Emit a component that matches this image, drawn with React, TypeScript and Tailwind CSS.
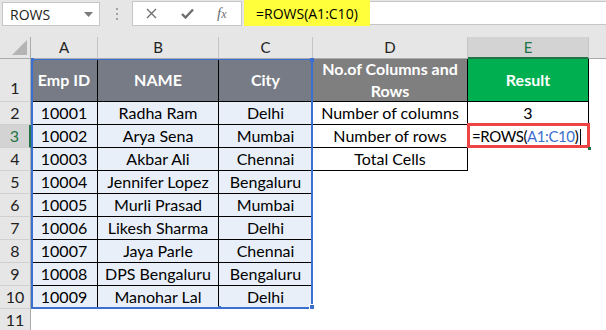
import React from 'react';

const cellFont = "font-['Lato',sans-serif]";

const rows = [
  ['10001', 'Radha Ram', 'Delhi'],
  ['10002', 'Arya Sena', 'Mumbai'],
  ['10003', 'Akbar Ali', 'Chennai'],
  ['10004', 'Jennifer Lopez', 'Bengaluru'],
  ['10005', 'Murli Prasad', 'Mumbai'],
  ['10006', 'Likesh Sharma', 'Delhi'],
  ['10007', 'Jaya Parle', 'Chennai'],
  ['10008', 'DPS Bengaluru', 'Bengaluru'],
  ['10009', 'Manohar Lal', 'Delhi'],
];

const FormulaBar = () => (
  <div className="flex h-[27px] items-start bg-[#e6e6e6] font-['Open_Sans',sans-serif]">
    <div className="ml-[2px] mt-[2px] flex h-[24px] w-[98px] items-center justify-between border border-[#c6c6c6] bg-white pl-[7px] pr-[6px] text-[14px] text-[#222]">
      <span>ROWS</span>
      <svg width="9" height="5" viewBox="0 0 9 5">
        <path d="M0 0h9L4.5 5z" fill="#7b7b7b" />
      </svg>
    </div>
    <div className="ml-[16px] mt-[8px] flex flex-col gap-[3px]">
      <span className="h-[2px] w-[2px] bg-[#a0a0a0]" />
      <span className="h-[2px] w-[2px] bg-[#a0a0a0]" />
      <span className="h-[2px] w-[2px] bg-[#a0a0a0]" />
    </div>
    <div className="ml-[14px] mt-[1px] flex h-[25px] w-[110px] items-center border border-[#c6c6c6] bg-white">
      <svg className="ml-[13px]" width="11" height="11" viewBox="0 0 11 11">
        <path d="M1 1l9 9M10 1l-9 9" stroke="#6e6e6e" strokeWidth="1.3" />
      </svg>
      <svg className="ml-[24px]" width="13" height="11" viewBox="0 0 13 11">
        <path d="M1 6l3.5 3.5L12 1.5" stroke="#6e6e6e" strokeWidth="2.4" fill="none" />
      </svg>
      <span className="ml-[23px] font-['Liberation_Serif',serif] text-[15px] italic leading-none text-[#6e6e6e]">
        f<span className="text-[12px]">x</span>
      </span>
    </div>
    <div className="ml-[2px] flex h-[26px] flex-1 items-stretch">
      <div className="flex w-[126px] items-center bg-[#ffff3c] pl-[12px] text-[14px] text-black">=ROWS(A1:C10)</div>
      <div className="mt-[1px] h-[24px] flex-1 border-y border-[#c6c6c6] bg-white" />
    </div>
  </div>
);

const ColHeader = ({ label, w, selected }: { label: string; w: string; selected?: boolean }) => (
  <div
    className={`${w} flex items-center justify-center border-r border-[#c4c4c4] ${
      selected ? 'border-b-2 border-b-[#217346] bg-[#d3d3d3] text-[#217346]' : 'border-b border-b-[#ababab]'
    }`}
  >
    {label}
  </div>
);

const RowNum = ({ n, h, selected, bottom }: { n: number; h: string; selected?: boolean; bottom?: boolean }) => (
  <div
    className={`${h} flex justify-center border-b border-[#d0d0d0] ${bottom ? 'items-end pb-[1px]' : 'items-center'} ${
      selected ? 'border-r-2 border-r-[#217346] bg-[#d3d3d3] text-[#217346]' : 'border-r border-r-[#ababab]'
    }`}
  >
    {n}
  </div>
);

export default function App() {
  return (
    <div className="h-[330px] w-[606px] overflow-hidden bg-white">
      <FormulaBar />
      <div className="h-[10px] bg-[#e6e6e6]" />

      {/* column headers */}
      <div className={`flex h-[22px] bg-[#e6e6e6] text-[15px] text-[#222] ${cellFont}`}>
        <div className="flex w-[31px] items-end justify-end border-r border-b border-[#ababab] pb-[3px] pr-[3px]">
          <svg width="15" height="15" viewBox="0 0 15 15">
            <path d="M15 0v15H0z" fill="#b4b4b4" />
          </svg>
        </div>
        <ColHeader label="A" w="w-[67px]" />
        <ColHeader label="B" w="w-[121px]" />
        <ColHeader label="C" w="w-[94px]" />
        <ColHeader label="D" w="w-[155px]" />
        <ColHeader label="E" w="w-[121px]" selected />
        <div className="flex-1 border-b border-[#ababab]" />
      </div>

      <div className={`flex text-[16px] text-black ${cellFont}`}>
        {/* row numbers */}
        <div className="flex w-[31px] flex-col bg-[#e6e6e6] text-[16px] text-[#222]">
          <RowNum n={1} h="h-[43px]" bottom />
          {[2, 3, 4, 5, 6, 7, 8, 9, 10, 11].map((n) => (
            <RowNum key={n} n={n} h="h-[23px]" selected={n === 3} />
          ))}
        </div>

        {/* A1:C10 */}
        <div className="relative w-[282px] self-start">
          <div className="grid grid-cols-[67px_121px_94px] grid-rows-[43px_repeat(9,23px)]">
            {['Emp ID', 'NAME', 'City'].map((h) => (
              <div key={h} className="flex items-center justify-center border-r border-b border-black bg-[#767b85] font-bold text-white">
                {h}
              </div>
            ))}
            {rows.map((r) =>
              r.map((v, i) => (
                <div key={r[0] + i} className="flex items-center justify-center border-r border-b border-black bg-[#e9eff8]">
                  {v}
                </div>
              )),
            )}
          </div>
          <div className="pointer-events-none absolute inset-0 border-x-2 border-t border-b-2 border-[#3b6fd0]">
            <span className="absolute -left-[2px] -top-[2px] h-[3px] w-[3px] bg-[#3b6fd0]" />
            <span className="absolute -right-[3px] -top-[2px] h-[4px] w-[4px] bg-[#3b6fd0]" />
            <span className="absolute -bottom-[3px] -right-[4px] h-[6px] w-[6px] border border-white bg-[#3b6fd0]" />
            <span className="absolute -bottom-[2px] left-[185px] h-[3px] w-[3px] bg-[#3b6fd0]" />
          </div>
        </div>

        {/* D1:E4 */}
        <div className="grid w-[276px] grid-cols-[155px_121px] grid-rows-[43px_repeat(3,23px)] self-start">
          <div className="flex flex-col items-center justify-center border-r border-b border-black bg-[#7f7f7f] font-bold leading-[22px] text-white">
            <span>No.of Columns and</span>
            <span>Rows</span>
          </div>
          <div className="flex items-center justify-center border-r border-b border-black bg-[#00b050] font-bold text-white">
            Result
          </div>
          <div className="flex items-center justify-center border-r border-b border-black">Number of columns</div>
          <div className="flex items-center justify-center border-r border-b border-black">3</div>
          <div className="flex items-center justify-center border-r border-b border-black">Number of rows</div>
          <div className="relative flex items-center pl-[4px] text-[15px] tracking-[-0.4px]">
            <span className="whitespace-nowrap">
              =ROWS(<span className="text-[#3b6fd0]">A1:C10</span>)
            </span>
            <span className="ml-[2px] h-[16px] w-px bg-black" />
            <span className="pointer-events-none absolute -left-[1px] -top-[2px] -right-[1px] bottom-0 border-[3px] border-[#ee4444]" />
            <span className="absolute -bottom-[2px] -right-[2px] h-[3px] w-[3px] bg-[#217346]" />
          </div>
          <div className="flex items-center justify-center border-r border-b border-black">Total Cells</div>
          <div />
        </div>
      </div>
    </div>
  );
}
